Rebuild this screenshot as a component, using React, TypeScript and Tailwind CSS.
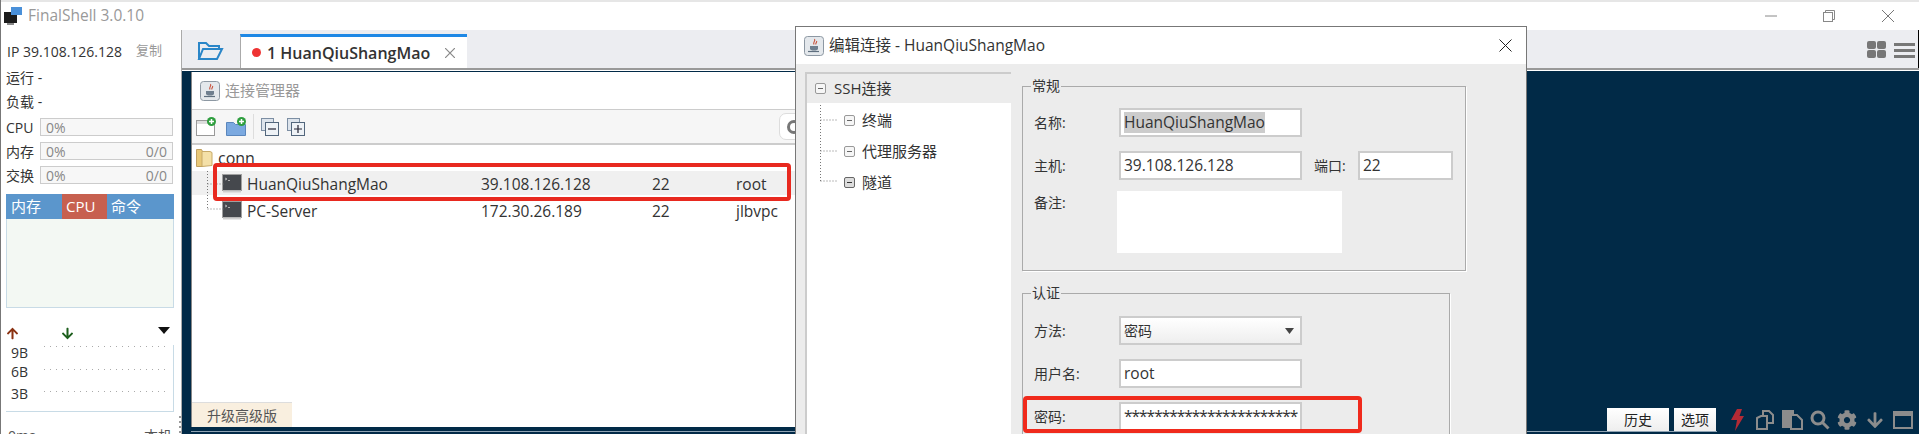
import { FaArrowDown, FaArrowUp, FaCog } from "react-icons/fa";

function JavaIcon() {
	return (
		<svg width="20" height="20" viewBox="0 0 20 20" className="shrink-0">
			<rect x="0.5" y="0.5" width="19" height="19" rx="3" fill="#e4e8ec" stroke="#8d98a3" />
			<path d="M10.5 3c1.5 2-2 3-0.5 5.5M12.5 5c1 1.4-1.5 2-0.5 3.5" fill="none" stroke="#c8503a" strokeWidth="1.1" />
			<path d="M6 10h8v2.5c0 1.5-1.500 2-4 2s-4-.5-4-2z" fill="#6f7f8f" />
			<path d="M4 15.500h11" stroke="#5f6f7f" strokeWidth="1.200" />
		</svg>
	);
}

function TerminalIcon() {
	return (
		<svg width="20" height="20" viewBox="0 0 20 20" className="shrink-0">
			<rect x="0.5" y="1.500" width="19" height="16" fill="#45484d" stroke="#a0a0a0" />
			<rect x="1" y="17.500" width="18" height="2" fill="#cfcfcf" />
			<path d="M3 5l2 1-2 1M6 7.500h2" stroke="#c8c8c8" strokeWidth="0.800" fill="none" />
		</svg>
	);
}

function Toggle({ dark }: { dark?: boolean }) {
	return (
		<span className={`flex h-[11px] w-[11px] shrink-0 items-center justify-center rounded-[2px] border ${dark ? "border-[#666] bg-[#ddd]" : "border-[#999] bg-[#f6f6f6]"}`}>
			<span className={`h-px w-[5px] ${dark ? "bg-[#333]" : "bg-[#666]"}`} />
		</span>
	);
}

function Metric({ label, value }: { label: string; value?: string }) {
	return (
		<div className="flex h-[18px] items-center pl-[5px]">
			<span className="w-[34px] text-[14px] text-[#333]">{label}</span>
			<div className="flex h-[18px] w-[133px] items-center justify-between border border-[#ccc] bg-[#f7f7f7] px-[5px] text-[14px] text-[#888]">
				<span>0%</span>
				{value && <span>{value}</span>}
			</div>
		</div>
	);
}

function Sidebar() {
	return (
		<aside className="relative flex w-[180px] shrink-0 flex-col text-[14px] text-[#333]">
			<div className="mt-[11px] flex h-[20px] shrink-0 items-center pl-[6px]">
				<span className="w-[129px]">IP 39.108.126.128</span>
				<span className="text-[13px] text-[#999]">复制</span>
			</div>
			<div className="mt-[6px] flex h-[20px] shrink-0 items-center pl-[5px]">运行 -</div>
			<div className="mt-[4px] flex h-[20px] shrink-0 items-center pl-[5px]">负载 -</div>
			<div className="mt-[7px] flex shrink-0 flex-col gap-[6px]">
				<Metric label="CPU" />
				<Metric label="内存" value="0/0" />
				<Metric label="交换" value="0/0" />
			</div>
			<div className="ml-[5px] mt-[10px] flex h-[25px] w-[168px] shrink-0 text-[15px] text-white">
				<div className="flex w-[56px] items-center bg-[#5b96cc] pl-[5px]">内存</div>
				<div className="flex w-[45px] items-center bg-[#c7604f] pl-[4px]">CPU</div>
				<div className="flex flex-1 items-center bg-[#5b96cc] pl-[4px]">命令</div>
			</div>
			<div className="ml-[5px] h-[89px] w-[168px] shrink-0 border-x border-b border-[#c8dbe6] bg-[#f3f8f3]" />
			<div className="ml-[5px] mt-[17px] flex h-[16px] w-[168px] shrink-0 items-center">
				<FaArrowUp className="text-[13px] text-[#8b3212]" />
				<FaArrowDown className="ml-[42px] text-[13px] text-[#1c5e1c]" />
				<svg width="12" height="7" viewBox="0 0 12 7" className="ml-auto mr-[4px] -translate-y-[3px]">
					<path d="M0 0h12L6 7z" fill="#111" />
				</svg>
			</div>
			<div className="ml-[5px] mt-[4px] flex h-[67px] w-[168px] shrink-0 border-b border-r border-[#c8dbe6] pl-[5px] text-[14px] text-[#333]">
				<div className="flex w-[33px] flex-col leading-[20px]">
					<span className="mt-[-2px]">9B</span>
					<span className="mt-[-1px]">6B</span>
					<span className="mt-[2px]">3B</span>
				</div>
				<svg className="h-[50px] flex-1">
					<path d="M0 1.500H126M0 24.500H126M0 46.500H126" stroke="#aaa" strokeDasharray="1 5" fill="none" />
				</svg>
			</div>
			<div className="ml-[7px] mt-[13px] flex w-[164px] shrink-0 justify-between text-[14px] text-[#555]">
				<span>0ms</span>
				<span>本机</span>
			</div>
			<div className="absolute right-0 top-[386px] flex flex-col gap-[3px]">
				<span className="h-[2px] w-[2px] bg-[#999]" />
				<span className="h-[2px] w-[2px] bg-[#999]" />
				<span className="h-[2px] w-[2px] bg-[#999]" />
				<span className="h-[2px] w-[2px] bg-[#999]" />
			</div>
		</aside>
	);
}

function TreeRow({ name, host, user, selected }: { name: string; host: string; user: string; selected?: boolean }) {
	return (
		<div className={`grid h-[24px] grid-cols-[30px_25px_234px_171px_84px_1fr] items-center text-[15.5px] leading-[21px] text-[#333] ${selected ? "bg-[#f0f0f0]" : ""}`}>
			<span />
			<TerminalIcon />
			<span className="pt-[3px]">{name}</span>
			<span className="pt-[3px]">{host}</span>
			<span className="pt-[3px]">22</span>
			<span className="pt-[3px]">{user}</span>
		</div>
	);
}

function ConnectionManager() {
	return (
		<section className="flex h-[355px] w-[648px] shrink-0 flex-col border-l border-[#888] bg-white">
			<header className="flex h-[38px] shrink-0 items-center gap-[5px] border-b border-[#ccc] pl-[8px] text-[15px] text-[#999]">
				<JavaIcon />
				连接管理器
			</header>
			<div className="flex h-[35px] shrink-0 items-center border-b-2 border-[#ccc] bg-[#f6f6f6] pl-[4px]">
				<svg width="21" height="20" viewBox="0 0 21 20">
					<rect x="0.5" y="3.500" width="18" height="15" fill="#fff" stroke="#999" />
					<rect x="1" y="4" width="17" height="3" fill="#ddd" />
					<circle cx="15.500" cy="4.500" r="4.500" fill="#2e9e3e" />
					<path d="M13 4.500h5M15.500 2v5" stroke="#fff" strokeWidth="1.500" />
				</svg>
				<svg width="21" height="20" viewBox="0 0 21 20" className="ml-[9px]">
					<path d="M0.500 5.500h7l2 2h10v11h-19z" fill="#7ba9e0" stroke="#5a86bc" />
					<circle cx="15.500" cy="4.500" r="4.500" fill="#2e9e3e" />
					<path d="M13 4.500h5M15.500 2v5" stroke="#fff" strokeWidth="1.500" />
				</svg>
				<div className="ml-[6px] h-[25px] w-px bg-[#ddd]" />
				<svg width="18" height="18" viewBox="0 0 18 18" className="ml-[7px]">
					<rect x="0.500" y="0.500" width="12" height="12" fill="#dde4ec" stroke="#7c8ea3" />
					<rect x="4.500" y="4.500" width="13" height="13" fill="#eef2f6" stroke="#52667c" />
					<path d="M7 11h8" stroke="#223" strokeWidth="1.200" />
				</svg>
				<svg width="18" height="18" viewBox="0 0 18 18" className="ml-[8px]">
					<rect x="0.500" y="0.500" width="12" height="12" fill="#dde4ec" stroke="#7c8ea3" />
					<rect x="4.500" y="4.500" width="13" height="13" fill="#eef2f6" stroke="#52667c" />
					<path d="M7 11h8M11 7v8" stroke="#223" strokeWidth="1.200" />
				</svg>
				<div className="ml-auto flex h-[27px] w-[60px] items-center rounded-[7px] border border-[#ddd] bg-white pl-[7px]">
					<span className="h-[14px] w-[14px] rounded-full border-[3px] border-[#777]" />
				</div>
			</div>
			<div className="relative flex flex-1 flex-col">
				<div className="flex h-[26px] items-center pl-[4px] text-[16px] text-[#333]">
					<svg width="17" height="20" viewBox="0 0 17 20" className="mr-[5px]">
						<path d="M0.500 1.500h5l1 2v15h-6z" fill="#e8c878" stroke="#c0a060" />
						<path d="M6 3.500h8l2 1v13l-10 1z" fill="#f4e0a8" stroke="#c8aa68" />
					</svg>
					conn
				</div>
				<TreeRow name="HuanQiuShangMao" host="39.108.126.128" user="root" selected />
				<div className="mt-[3px]">
					<TreeRow name="PC-Server" host="172.30.26.189" user="jlbvpc" />
				</div>
				<svg width="18" height="44" className="absolute left-[14px] top-[26px]">
					<path d="M1.500 0v38M1.500 13h16M1.500 38h16" stroke="#777" strokeDasharray="1 2" fill="none" />
				</svg>
			</div>
			<div className="flex h-[25px] w-[100px] shrink-0 items-center justify-center border-t border-[#ddd] bg-[#f9efdf] text-[14px] text-[#555]">
				升级高级版
			</div>
		</section>
	);
}

function FormRow({ label, value, selected, stars }: { label: string; value: string; selected?: boolean; stars?: boolean }) {
	return (
		<div className="flex items-center pl-[11px]">
			<span className="w-[85px] text-[14px]">{label}</span>
			<div className={`flex h-[29px] w-[183px] items-center overflow-hidden border-2 border-[#ccc] bg-white pl-[3px] text-[15.5px] ${stars ? "tracking-[-1px]" : ""}`}>
				<span className={`leading-[21px] ${selected ? "bg-[#ccc]" : ""}`}>{value}</span>
			</div>
		</div>
	);
}

function EditDialog() {
	return (
		<div className="absolute left-[794px] top-[26px] flex h-[420px] w-[732px] flex-col border border-[#777] bg-[#ececec] text-[#333]">
			<div className="flex h-[37px] shrink-0 items-center gap-[5px] bg-white pl-[8px] pr-[14px] text-[15.5px]">
				<JavaIcon />
				<span>编辑连接 - HuanQiuShangMao</span>
				<svg width="13" height="13" viewBox="0 0 13 13" className="ml-auto">
					<path d="M0.500 0.500l12 12M12.500 0.500l-12 12" stroke="#222" />
				</svg>
			</div>
			<div className="flex flex-1 pl-[9px] pt-[8px]">
				<div className="flex w-[206px] shrink-0 flex-col border-l-2 border-t-2 border-[#ccc] bg-white text-[15px]">
					<div className="flex h-[29px] items-center gap-[8px] bg-[#ececec] pl-[8px]">
						<Toggle />
						SSH连接
					</div>
					<div className="relative pt-[2px]">
						{["终端", "代理服务器", "隧道"].map((item, i) => (
							<div key={item} className="flex h-[31px] items-center gap-[7px] pl-[37px]">
								<Toggle dark={i === 2} />
								{item}
							</div>
						))}
						<svg width="22" height="80" className="absolute left-[12px] top-[2px]">
							<path d="M1.500 0v76M1.500 15h18M1.500 46h18M1.500 76h18" stroke="#777" strokeDasharray="1 2" fill="none" />
						</svg>
					</div>
				</div>
				<div className="ml-[11px] mt-[4px] flex flex-col text-[14px]">
					<fieldset className="h-[195px] w-[444px] border border-[#aaa] shadow-[1px_1px_0_#fff]">
						<legend className="ml-[8px] px-[1px] leading-[20px]">常规</legend>
						<div className="mt-[12px] flex flex-col">
							<FormRow label="名称:" value="HuanQiuShangMao" selected />
							<div className="mt-[14px] flex items-center">
								<FormRow label="主机:" value="39.108.126.128" />
								<span className="ml-[12px] w-[44px]">端口:</span>
								<div className="flex h-[29px] w-[95px] items-center border-2 border-[#ccc] bg-white pl-[3px] text-[15.5px]">22</div>
							</div>
							<div className="mt-[11px] flex pl-[11px]">
								<span className="w-[83px] pt-[1px]">备注:</span>
								<div className="h-[62px] w-[225px] bg-white" />
							</div>
						</div>
					</fieldset>
					<fieldset className="mt-[12px] w-[428px] border border-[#aaa] pb-[20px] shadow-[1px_1px_0_#fff]">
						<legend className="ml-[8px] px-[1px] leading-[20px]">认证</legend>
						<div className="mt-[13px] flex flex-col gap-[14px]">
							<div className="flex items-center pl-[11px]">
								<span className="w-[85px]">方法:</span>
								<div className="flex h-[29px] w-[183px] items-center justify-between border-2 border-[#ccc] bg-gradient-to-b from-white to-[#eee] px-[3px] text-[14px]">
									密码
									<svg width="9" height="6" viewBox="0 0 9 6" className="mr-[3px]">
										<path d="M0 0h9L4.500 6z" fill="#444" />
									</svg>
								</div>
							</div>
							<FormRow label="用户名:" value="root" />
							<FormRow label="密码:" value="***********************" stars />
						</div>
					</fieldset>
				</div>
			</div>
		</div>
	);
}

function BottomTools() {
	const grey = "#8c8c8c";
	return (
		<div className="mt-auto flex flex-1 items-center justify-end pb-[3px] pr-[6px]">
			<button className="h-[23px] w-[62px] bg-gradient-to-b from-white to-[#eee] text-[14px] text-[#222]">历史</button>
			<button className="ml-[5px] h-[23px] w-[42px] bg-gradient-to-b from-white to-[#eee] text-[14px] text-[#222]">选项</button>
			<svg width="13" height="22" viewBox="0 0 13 22" className="ml-[15px]">
				<path d="M6 0h5L8.500 7H13L4 22l2-11H0z" fill="#b42a35" />
			</svg>
			<svg width="21" height="20" viewBox="0 0 21 20" className="ml-[11px]" fill="none" stroke={grey} strokeWidth="2">
				<path d="M8 6V1h6l4 4v8h-6" />
				<path d="M2 8l4-2h6v13H2z" />
			</svg>
			<svg width="21" height="20" viewBox="0 0 21 20" className="ml-[6px]">
				<rect x="0" y="0" width="12" height="18" fill={grey} />
				<path d="M9 5h6l5 5v9H9z" fill="#012a47" stroke={grey} strokeWidth="2" />
			</svg>
			<svg width="20" height="20" viewBox="0 0 20 20" className="ml-[7px]" fill="none" stroke={grey} strokeWidth="3">
				<circle cx="8" cy="8" r="6" />
				<path d="M12.500 12.500l6 6" />
			</svg>
			<FaCog className="ml-[7px] text-[20px] text-[#8c8c8c]" />
			<FaArrowDown className="ml-[9px] text-[18px] text-[#8c8c8c]" />
			<svg width="20" height="18" viewBox="0 0 20 18" className="ml-[9px]" fill="none" stroke={grey}>
				<rect x="1" y="1" width="18" height="16" strokeWidth="2" />
				<path d="M1 3.500h18" strokeWidth="3" />
			</svg>
		</div>
	);
}

export default function App() {
	return (
		<div className="relative flex h-[434px] w-[1919px] flex-col overflow-hidden border-l border-[#777] bg-white font-['Open_Sans','Noto_Sans_CJK_SC',sans-serif]">
			<header className="flex h-[30px] shrink-0 items-center border-t-2 border-[#e6e6e6] pl-[3px]">
				<svg width="19" height="19" viewBox="0 0 19 19">
					<rect x="0" y="5" width="13" height="11" fill="#1c1c1c" />
					<rect x="7" y="0" width="11" height="8" fill="#4a90d9" />
					<rect x="3" y="16" width="7" height="2" fill="#888" />
				</svg>
				<span className="ml-[5px] text-[15.5px] text-[#999]">FinalShell 3.0.10</span>
				<svg width="12" height="12" viewBox="0 0 12 12" className="ml-auto">
					<path d="M0 6h12" stroke="#888" />
				</svg>
				<svg width="12" height="12" viewBox="0 0 12 12" className="ml-[46px]" fill="none" stroke="#888">
					<rect x="0.500" y="2.500" width="9" height="9" />
					<path d="M2.500 2.500v-2h9v9h-2" />
				</svg>
				<svg width="12" height="12" viewBox="0 0 12 12" className="ml-[47px] mr-[25px]">
					<path d="M0 0l12 12M12 0L0 12" stroke="#777" />
				</svg>
			</header>
			<div className="flex min-h-0 flex-1">
				<Sidebar />
				<main className="flex min-w-0 flex-1 flex-col border-l border-[#aaa]">
					<div className="flex h-[38px] shrink-0 items-end border-r border-black bg-[#ecedf1] pl-[14px]">
						<svg width="28" height="20" viewBox="0 0 28 20" className="mb-[7px]" fill="none" stroke="#2a86c8" strokeWidth="2">
							<path d="M3 18V2h7l3 3h10v3" />
							<path d="M3 18l4-10h19l-5 10z" />
						</svg>
						<div className="ml-[16px] flex h-[34px] w-[227px] items-center border-l border-t-[3px] border-[#aaa] border-t-[#1e88e5] bg-white pl-[11px] text-[16px] font-semibold text-[#333]">
							<span className="h-[9px] w-[9px] rounded-full bg-[#ee3333]" />
							<span className="ml-[6px]">1 HuanQiuShangMao</span>
							<svg width="10" height="10" viewBox="0 0 10 10" className="ml-[15px]">
								<path d="M0 0l10 10M10 0L0 10" stroke="#888" strokeWidth="1.200" />
							</svg>
						</div>
						<div className="ml-auto mb-[10px] grid grid-cols-2 gap-px">
							<span className="h-[8px] w-[9px] rounded-[2px] bg-[#777]" />
							<span className="h-[8px] w-[9px] rounded-[2px] bg-[#777]" />
							<span className="h-[8px] w-[9px] rounded-[2px] bg-[#777]" />
							<span className="h-[8px] w-[9px] rounded-[2px] bg-[#777]" />
						</div>
						<div className="mb-[10px] ml-[8px] mr-[3px] flex flex-col gap-[3px]">
							<span className="h-[3px] w-[21px] bg-[#777]" />
							<span className="h-[3px] w-[21px] bg-[#777]" />
							<span className="h-[3px] w-[21px] bg-[#777]" />
						</div>
					</div>
					<div className="h-[3px] shrink-0 border-t-2 border-[#999] bg-white" />
					<div className="flex min-h-0 flex-1 bg-[#012a47] pl-[9px] pt-px">
						<ConnectionManager />
						<BottomTools />
					</div>
				</main>
			</div>
			<div className="absolute left-[190px] top-[431px] h-px w-[1526px] bg-[#8fa3b3]" />
			<div className="absolute left-[212px] top-[163px] h-[38px] w-[578px] rounded-[4px] border-4 border-[#e8291f]" />
			<EditDialog />
			<div className="absolute left-[1022px] top-[396px] h-[37px] w-[339px] rounded-[4px] border-4 border-[#f02a1c]" />
		</div>
	);
}
